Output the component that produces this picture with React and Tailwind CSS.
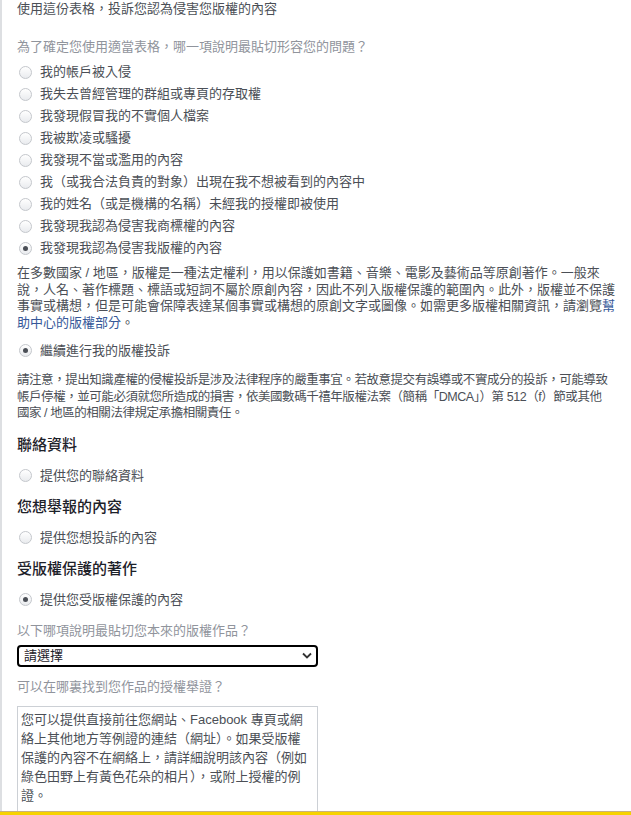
import React from 'react';

const FONT = { fontFamily: '"Liberation Sans", "Noto Sans CJK TC", sans-serif' };

const reasons = [
    '我的帳戶被入侵',
    '我失去曾經管理的群組或專頁的存取權',
    '我發現假冒我的不實個人檔案',
    '我被欺凌或騷擾',
    '我發現不當或濫用的內容',
    '我（或我合法負責的對象）出現在我不想被看到的內容中',
    '我的姓名（或是機構的名稱）未經我的授權即被使用',
    '我發現我認為侵害我商標權的內容',
    '我發現我認為侵害我版權的內容',
];

function Radio({ label, checked }) {
    return (
        <div className="flex items-center h-[22px]">
            <span className="ml-[2px] w-[13px] h-[13px] rounded-full border border-[#c4c7cc] bg-gradient-to-b from-white to-[#e9ebee] flex items-center justify-center shrink-0">
                {checked && <span className="w-[5px] h-[5px] rounded-full bg-[#4b4f56]" />}
            </span>
            <span className="ml-[8px] text-[13px] text-[#4b4f56] whitespace-nowrap">{label}</span>
        </div>
    );
}

function Heading({ children, className = '' }) {
    return (
        <div className={`text-[15px] leading-[22px] font-medium text-[#1d2129] ${className}`}>{children}</div>
    );
}

export default function App() {
    return (
        <div className="relative h-[815px] overflow-hidden bg-white" style={FONT}>
            <div className="h-full border-l-2 border-[#dddfe2] pl-[15px] pr-[12px]">
                <div className="text-[13px] leading-[18px] text-[#4b4f56]">使用這份表格，投訴您認為侵害您版權的內容</div>

                <div className="mt-[20px] text-[13px] leading-[18px] text-[#90949c]">
                    為了確定您使用適當表格，哪一項說明最貼切形容您的問題？
                </div>

                <div className="mt-[5px]">
                    {reasons.map((r, i) => (
                        <Radio key={i} label={r} checked={i === reasons.length - 1} />
                    ))}
                </div>

                <p className="mt-[6px] text-[13px] leading-[16.7px] text-[#4b4f56] whitespace-nowrap">
                    在多數國家 / 地區，版權是一種法定權利，用以保護如書籍、音樂、電影及藝術品等原創著作。一般來<br />
                    說，人名、著作標題、標語或短詞不屬於原創內容，因此不列入版權保護的範圍內。此外，版權並不保護<br />
                    事實或構想，但是可能會保障表達某個事實或構想的原創文字或圖像。如需更多版權相關資訊，請瀏覽<span className="text-[#365899]">幫</span><br />
                    <span className="text-[#365899]">助中心的版權部分</span>。
                </p>

                <div className="mt-[8px]">
                    <Radio label="繼續進行我的版權投訴" checked />
                </div>

                <p className="mt-[10px] text-[12.5px] tracking-[-0.45px] leading-[16.7px] text-[#4b4f56] whitespace-nowrap">
                    請注意，提出知識產權的侵權投訴是涉及法律程序的嚴重事宜。若故意提交有誤導或不實成分的投訴，可能導致<br />
                    帳戶停權，並可能必須就您所造成的損害，依美國數碼千禧年版權法案（簡稱「DMCA」）第 512（f）節或其他<br />
                    國家 / 地區的相關法律規定承擔相關責任。
                </p>

                <Heading className="mt-[12px]">聯絡資料</Heading>
                <div className="mt-[9px]">
                    <Radio label="提供您的聯絡資料" />
                </div>

                <Heading className="mt-[9px]">您想舉報的內容</Heading>
                <div className="mt-[9px]">
                    <Radio label="提供您想投訴的內容" />
                </div>

                <Heading className="mt-[9px]">受版權保護的著作</Heading>
                <div className="mt-[9px]">
                    <Radio label="提供您受版權保護的內容" checked />
                </div>

                <div className="mt-[11px] text-[13px] leading-[18px] text-[#90949c]">以下哪項說明最貼切您本來的版權作品？</div>
                <div className="mt-[5px] w-[301px] h-[22px] border-2 border-black rounded-[4px] flex items-center justify-between pl-[5px] pr-[4px]">
                    <span className="text-[13px] text-[#1d2129]">請選擇</span>
                    <svg width="10" height="7" viewBox="0 0 10 7" fill="none">
                        <path d="M1 1.5 L5 5.5 L9 1.5" stroke="#333" strokeWidth="1.8" />
                    </svg>
                </div>

                <div className="mt-[11px] text-[13px] leading-[18px] text-[#90949c]">可以在哪裏找到您作品的授權舉證？</div>
                <div className="mt-[10px] w-[301px] h-[140px] border border-[#ccd0d5] px-[3px] pt-[3px] text-[13px] leading-[19px] text-[#4b4f56] whitespace-nowrap">
                    您可以提供直接前往您網站、Facebook 專頁或網<br />
                    絡上其他地方等例證的連結（網址）。如果受版權<br />
                    保護的內容不在網絡上，請詳細說明該內容（例如<br />
                    綠色田野上有黃色花朵的相片），或附上授權的例<br />
                    證。
                </div>
            </div>

            <div className="absolute left-0 right-0 bottom-0 h-[4px] border-t border-[#c8b27a] bg-[#f7d200]" />
        </div>
    );
}
